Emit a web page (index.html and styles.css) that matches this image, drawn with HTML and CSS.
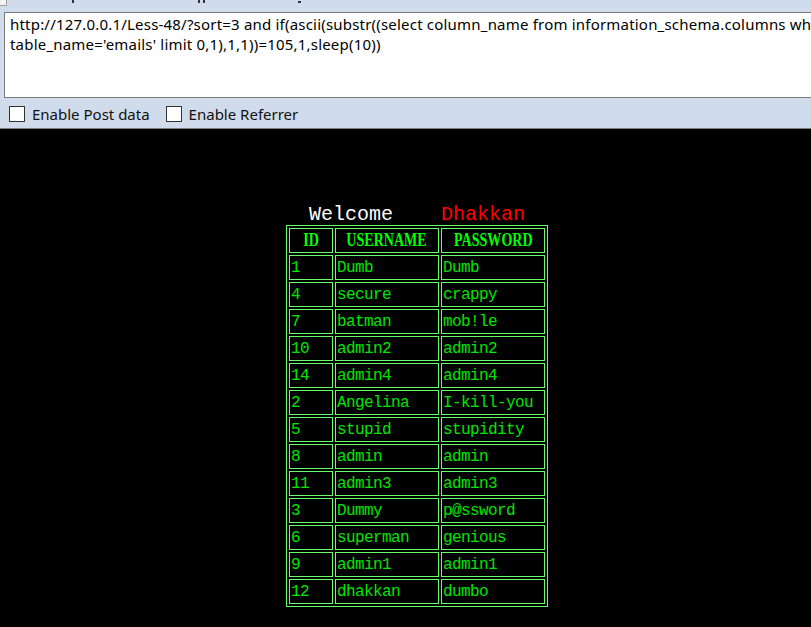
FILE: index.html
```html
<!DOCTYPE html>
<html>
<head>
<meta charset="utf-8">
<title>Less-48</title>
<link rel="stylesheet" href="styles.css">
</head>
<body>
<div class="bar">
  <div class="cut">
    <span class="cut-box"></span>
    <span class="mark m1"></span>
    <span class="mark m2"></span>
    <span class="mark m3"></span>
    <span class="mark m4"></span>
  </div>
  <div class="url">http://127.0.0.1/Less-48/?sort=3 and if(ascii(substr((select column_name from information_schema.columns where
table_name='emails' limit 0,1),1,1))=105,1,sleep(10))</div>
  <div class="opts">
    <label class="opt"><span class="box"></span>Enable Post data</label>
    <label class="opt"><span class="box"></span>Enable Referrer</label>
  </div>
</div>
<main class="page">
  <div class="col">
    <div class="welcome"><span class="w">Welcome</span>&nbsp;&nbsp;&nbsp;&nbsp;<span class="d">Dhakkan</span></div>
    <table class="users">
      <tr><th class="c-id"><span class="hd">ID</span></th><th class="c-u"><span class="hd">USERNAME</span></th><th class="c-p"><span class="hd">PASSWORD</span></th></tr>
      <tr><td>1</td><td>Dumb</td><td>Dumb</td></tr>
      <tr><td>4</td><td>secure</td><td>crappy</td></tr>
      <tr><td>7</td><td>batman</td><td>mob!le</td></tr>
      <tr><td>10</td><td>admin2</td><td>admin2</td></tr>
      <tr><td>14</td><td>admin4</td><td>admin4</td></tr>
      <tr><td>2</td><td>Angelina</td><td>I-kill-you</td></tr>
      <tr><td>5</td><td>stupid</td><td>stupidity</td></tr>
      <tr><td>8</td><td>admin</td><td>admin</td></tr>
      <tr><td>11</td><td>admin3</td><td>admin3</td></tr>
      <tr><td>3</td><td>Dummy</td><td>p@ssword</td></tr>
      <tr><td>6</td><td>superman</td><td>genious</td></tr>
      <tr><td>9</td><td>admin1</td><td>admin1</td></tr>
      <tr><td>12</td><td>dhakkan</td><td>dumbo</td></tr>
    </table>
  </div>
</main>
</body>
</html>
```

FILE: styles.css
```css
* { box-sizing: border-box; }
html, body { margin: 0; padding: 0; }
body {
  background: #000;
  font-family: "Noto Sans", "Open Sans", sans-serif;
  overflow: hidden;
}
.bar {
  background: #d0dbeb;
  height: 129px;
  border-bottom: 1px solid #7f7f7f;
  overflow: hidden;
}
.cut {
  height: 12px;
  overflow: hidden;
  position: relative;
}
.cut-box {
  position: absolute;
  left: -1px;
  top: -8px;
  width: 8px;
  height: 14px;
  border: 1px solid #a0a0a0;
  background: #f4f4f4;
}
.mark {
  position: absolute;
  top: 0;
  width: 2px;
  height: 3px;
  background: #333;
}
.m1 { left: 72px; }
.m2 { left: 198px; }
.m3 { left: 203px; }
.m4 { left: 298px; width: 3px; height: 2px; top: 1px; }
.url {
  margin-left: 4px;
  width: 830px;
  height: 86px;
  background: #fff;
  border: 1px solid #7a7a7a;
  padding: 1px 5px;
  font-size: 15px;
  line-height: 20px;
  letter-spacing: 0.2px;
  color: #000;
  white-space: pre;
  overflow: hidden;
}
.opts {
  display: flex;
  align-items: center;
  gap: 16px;
  margin-top: 8px;
  padding-left: 9px;
  font-size: 15px;
  color: #111;
}
.opt {
  display: flex;
  align-items: center;
  gap: 7px;
  line-height: 16px;
}
.box {
  width: 16px;
  height: 16px;
  background: #fff;
  border: 1px solid #333;
}
.page {
  display: flex;
  padding-top: 75px;
  padding-left: 286px;
}
.col {
  width: 262px;
}
.welcome {
  height: 21px;
  line-height: 21px;
  text-align: center;
  font-family: "Liberation Mono", monospace;
  font-size: 20px;
  white-space: pre;
}
.w { color: #fff; }
.d { color: #f00; }
.users {
  width: 262px;
  table-layout: fixed;
  border: 1px solid #66ff66;
  border-spacing: 2px;
  border-collapse: separate;
  color: #00e600;
}
.users th, .users td {
  border: 1px solid #66ff66;
  height: 25px;
  padding: 0 1px;
}
.users th {
  font-family: "Liberation Serif", serif;
  font-weight: bold;
  font-size: 18px;
  text-align: center;
  color: #00ff00;
  white-space: nowrap;
}
.hd {
  display: inline-block;
  margin: 0 -14px;
  transform: scaleX(0.78);
}
.users td {
  font-family: "Liberation Mono", monospace;
  font-size: 16px;
  letter-spacing: -0.6px;
  text-align: left;
  white-space: nowrap;
  overflow: hidden;
}
.c-id { width: 44px; }
.c-u { width: 104px; }
.c-p { width: 104px; }
```
